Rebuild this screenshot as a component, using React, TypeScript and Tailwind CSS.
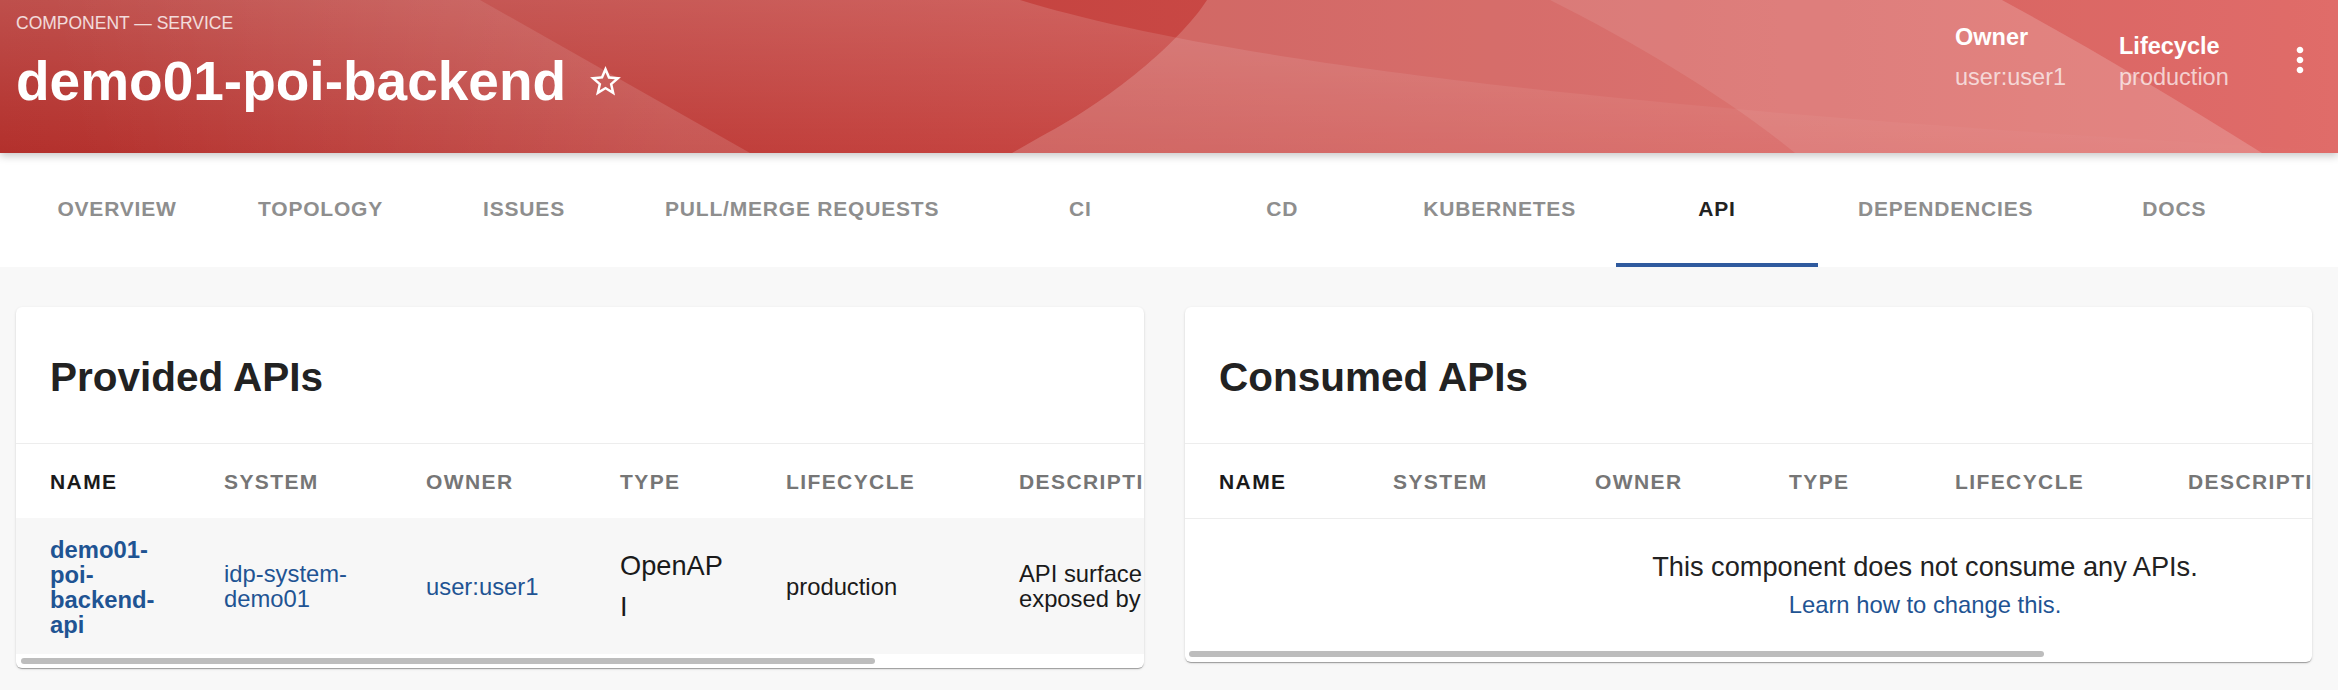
import React from "react";

const tabs = [
  "Overview",
  "Topology",
  "Issues",
  "Pull/Merge Requests",
  "CI",
  "CD",
  "Kubernetes",
  "API",
  "Dependencies",
  "Docs",
];

const columns = ["Name", "System", "Owner", "Type", "Lifecycle", "Description"];

function HeaderBackground() {
  return (
    <svg
      className="absolute inset-0"
      width="2338"
      height="153"
      viewBox="0 0 2338 153"
      preserveAspectRatio="none"
    >
      <defs>
        <linearGradient id="hbase" x1="0" y1="0" x2="1" y2="0">
          <stop offset="0" stopColor="#b3302c" />
          <stop offset="1" stopColor="#dd5e5b" />
        </linearGradient>
        <linearGradient id="hv" x1="0" y1="0" x2="0" y2="1">
          <stop offset="0" stopColor="#ffffff" stopOpacity="0.15" />
          <stop offset="1" stopColor="#ffffff" stopOpacity="0" />
        </linearGradient>
        <linearGradient
          id="hdiag"
          gradientUnits="userSpaceOnUse"
          x1="650"
          y1="20"
          x2="80"
          y2="153"
        >
          <stop offset="0" stopColor="#ffffff" stopOpacity="0.13" />
          <stop offset="1" stopColor="#ffffff" stopOpacity="0" />
        </linearGradient>
      </defs>
      <rect width="2338" height="153" fill="url(#hbase)" />
      <path d="M0 0H1020C1200 55 1560 108 2338 151V153H0Z" fill="url(#hv)" />
      <path d="M0 0H480L750 153H0Z" fill="url(#hdiag)" />
      <path
        d="M1207 0C1185 35 1120 95 1040 137L1012 153H2262C2170 95 2085 45 2002 0Z"
        fill="#ffffff"
        fillOpacity="0.18"
      />
      <path
        d="M1550 0C1640 45 1730 100 1795 153H2338V0Z"
        fill="#ffffff"
        fillOpacity="0.09"
      />
    </svg>
  );
}

function StarBorder() {
  return (
    <svg width="37" height="37" viewBox="0 0 24 24" fill="#ffffff">
      <path d="M22 9.24l-7.19-.62L12 2 9.19 8.63 2 9.24l5.46 4.73L5.82 21 12 17.27 18.18 21l-1.63-7.03L22 9.24zM12 15.4l-3.76 2.27 1-4.28-3.32-2.88 4.38-.38L12 6.1l1.71 4.04 4.38.38-3.32 2.88 1 4.28L12 15.4z" />
    </svg>
  );
}

function MoreVert() {
  return (
    <svg width="40" height="40" viewBox="0 0 24 24" fill="#ffffff">
      <path d="M12 8c1.1 0 2-.9 2-2s-.9-2-2-2-2 .9-2 2 .9 2 2 2zm0 2c-1.1 0-2 .9-2 2s.9 2 2 2 2-.9 2-2-.9-2-2-2zm0 6c-1.1 0-2 .9-2 2s.9 2 2 2 2-.9 2-2-.9-2-2-2z" />
    </svg>
  );
}

function Header() {
  return (
    <header className="relative z-10 h-[153px] overflow-hidden shadow-[0_3px_8px_rgba(0,0,0,0.22)]">
      <HeaderBackground />
      <div className="relative flex h-full pl-[16px] pr-[18px]">
        <div className="flex flex-col pt-[12px]">
          <div className="text-[17.5px] leading-[22px] uppercase text-white/80">
            Component — Service
          </div>
          <div className="mt-[15px] flex items-center">
            <h1 className="text-[55px] leading-[64px] font-bold text-white">
              demo01-poi-backend
            </h1>
            <div className="ml-[21px] flex">
              <StarBorder />
            </div>
          </div>
        </div>
        <div className="ml-auto flex">
          <div className="w-[164px] pt-[26px] flex flex-col">
            <span className="text-[23.5px] leading-none font-bold text-white">Owner</span>
            <span className="mt-[16.5px] text-[23.5px] leading-none text-white/70">
              user:user1
            </span>
          </div>
          <div className="w-[161px] pt-[35px] flex flex-col">
            <span className="text-[23.5px] leading-none font-bold text-white">Lifecycle</span>
            <span className="mt-[7.5px] text-[23.5px] leading-none text-white/70">
              production
            </span>
          </div>
          <div className="w-[40px] pt-[40px]">
            <MoreVert />
          </div>
        </div>
      </div>
    </header>
  );
}

function Tabs() {
  return (
    <nav className="flex h-[114px] bg-white pl-[16px]">
      {tabs.map((t) =>
        t === "API" ? (
          <div
            key={t}
            className="flex h-[114px] min-w-[202px] justify-center border-b-[4px] border-[#2f5a9e] px-[40px] pt-[45px] text-[21px] leading-none font-bold uppercase tracking-[0.8px] text-[#222222]"
          >
            {t}
          </div>
        ) : (
          <div
            key={t}
            className="flex h-[114px] min-w-[202px] justify-center border-b-[4px] border-transparent px-[40px] pt-[45px] text-[21px] leading-none font-bold uppercase tracking-[0.8px] text-[#8e8e8e]"
          >
            {t}
          </div>
        )
      )}
    </nav>
  );
}

function TableHead() {
  return (
    <div className="grid h-[74px] grid-cols-[174px_202px_194px_166px_233px_511px] items-center pt-[1px]">
      {columns.map((c, i) =>
        i === 0 ? (
          <div
            key={c}
            className="pl-[34px] pr-[26px] text-[21px] leading-none font-bold uppercase tracking-[1.4px] text-[#1a1a1a] whitespace-nowrap"
          >
            {c}
          </div>
        ) : (
          <div
            key={c}
            className="pl-[34px] pr-[26px] text-[21px] leading-none font-bold uppercase tracking-[1.4px] text-[#767676] whitespace-nowrap"
          >
            {c}
          </div>
        )
      )}
    </div>
  );
}

function Card({
  title,
  width,
  children,
}: {
  title: string;
  width: string;
  children: React.ReactNode;
}) {
  return (
    <section
      className={
        "overflow-hidden rounded-[6px] bg-white shadow-[0_2px_1px_-1px_rgba(0,0,0,0.2),0_1px_1px_0_rgba(0,0,0,0.14),0_1px_3px_0_rgba(0,0,0,0.12)] " +
        width
      }
    >
      <div className="flex h-[136px] items-center pl-[34px] pt-[5px]">
        <h2 className="text-[40.5px] leading-none font-bold text-[#222222]">{title}</h2>
      </div>
      <div className="h-[1px] bg-[#ededed]" />
      {children}
    </section>
  );
}

function ProvidedCard() {
  return (
    <Card title="Provided APIs" width="w-[1128px]">
      <div className="overflow-hidden">
        <div className="w-[1480px]">
          <TableHead />
          <div className="grid h-[136px] grid-cols-[174px_202px_194px_166px_233px_511px] items-center bg-[#f7f7f7]">
            <div className="pl-[34px] pr-[26px] pt-[2px] text-[23.8px] leading-[25px] font-bold text-[#1f5493]">
              demo01-poi-backend-api
            </div>
            <div className="pl-[34px] pr-[26px] text-[23.8px] leading-[25px] text-[#1f5493]">
              idp-system-demo01
            </div>
            <div className="pl-[34px] pr-[26px] text-[23.8px] leading-[25px] text-[#1f5493]">
              user:user1
            </div>
            <div className="pl-[34px] pr-[26px] text-[27.2px] leading-[41px] break-words text-[#1a1a1a]">
              OpenAPI
            </div>
            <div className="pl-[34px] pr-[26px] text-[23.8px] leading-[25px] text-[#1a1a1a]">
              production
            </div>
            <div className="pl-[34px] pr-[26px] text-[23.8px] leading-[25px] text-[#1a1a1a]">
              API surface of the demo01 POI backend, exposed by demo01-poi-backend.
            </div>
          </div>
        </div>
      </div>
      <div className="h-[14px] pl-[5px] pt-[4px]">
        <div className="h-[6px] w-[854px] rounded-full bg-[#bdbdbd]" />
      </div>
    </Card>
  );
}

function ConsumedCard() {
  return (
    <Card title="Consumed APIs" width="w-[1127px]">
      <div className="overflow-hidden">
        <div className="w-[1480px]">
          <TableHead />
          <div className="h-[1px] bg-[#ededed]" />
          <div className="flex h-[128px] flex-col items-center pt-[28px]">
            <p className="text-[27.2px] leading-[40.8px] text-[#222222]">
              This component does not consume any APIs.
            </p>
            <a className="text-[23.8px] leading-[34px] text-[#1f5493]">
              Learn how to change this.
            </a>
          </div>
        </div>
      </div>
      <div className="h-[15px] pl-[4px] pt-[4px]">
        <div className="h-[6px] w-[855px] rounded-full bg-[#bdbdbd]" />
      </div>
    </Card>
  );
}

export default function App() {
  return (
    <div className="h-[690px] w-[2338px] overflow-hidden bg-[#f8f8f8] font-['Liberation_Sans',Arial,sans-serif]">
      <Header />
      <Tabs />
      <main className="flex items-start gap-[41px] pl-[16px] pt-[40px]">
        <ProvidedCard />
        <ConsumedCard />
      </main>
    </div>
  );
}
